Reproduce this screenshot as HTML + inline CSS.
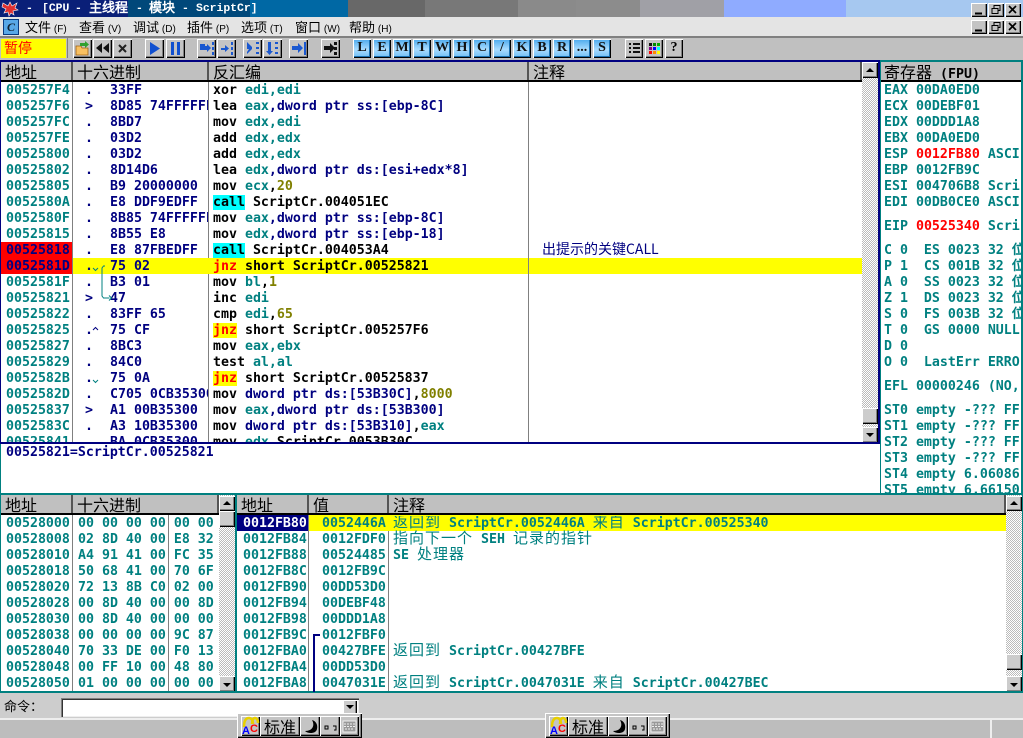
<!DOCTYPE html>
<html><head><meta charset="utf-8"><style>
*{box-sizing:border-box}
html,body{margin:0;padding:0;width:1023px;height:738px;overflow:hidden;background:#fff}
body{position:relative;font-family:"DejaVu Sans Mono","Noto Sans CJK SC",monospace}
div{position:absolute}
.m{font:bold 13.28px/16px "DejaVu Sans Mono","WenQuanYi Zen Hei",monospace;white-space:pre;overflow:hidden}
.t{color:#008080}.n{color:#000080}.k{color:#000}.o{color:#808000}.r{color:#f00}
.c{background:#0ff;color:#000}.j{background:#ff0;color:#f00}
.z{font:15px/16px "WenQuanYi Zen Hei","Noto Sans CJK SC",sans-serif;display:inline-block;height:16px;vertical-align:top;letter-spacing:1px;position:relative;top:-2px}
.h{background:#c0c0c0;border-bottom:2px solid #000;font:16px/19px "WenQuanYi Zen Hei","Noto Sans CJK SC",sans-serif;color:#000;padding-left:4px;white-space:pre;overflow:hidden;box-shadow:inset -2px 0 0 #555}
.b{background:#c4c4c4;box-shadow:inset 1px 1px 0 #fff,inset -1px -1px 0 #000,inset -2px -2px 0 #808080}
.w{background:#ccc;box-shadow:inset 1px 1px 0 #fff,inset -1px -1px 0 #000,inset -2px -2px 0 #808080}
.l{background:linear-gradient(#4aa8ec,#a8dcff 55%,#6cbcf4);box-shadow:inset 1px 1px 0 #fff,inset -1px -1px 0 #000,inset -2px -2px 0 #1a70b0;font:bold 14px/18px "Liberation Serif",serif;color:#111;text-align:center;width:18px;height:19px;top:39px}
.s{background-color:#fff;background-image:conic-gradient(#bbb 25%,#fff 0 50%,#bbb 0 75%,#fff 0);background-size:2px 2px}
.me{font:13px/18px "WenQuanYi Zen Hei","Noto Sans CJK SC",sans-serif;color:#000;top:18px;white-space:pre}
.me small{font:10px "Liberation Sans",sans-serif}
.ti{color:#fff;font:bold 11.4px/14px "Liberation Mono","WenQuanYi Zen Hei",monospace;top:2px;white-space:pre}
</style></head><body>

<!-- title bar -->
<div style="left:0;top:0;width:1023px;height:17px;background:linear-gradient(90deg,#0a1f78 0 128px,#00487a 128px 250px,#0068a4 250px 348px,#686868 348px 425px,#787878 425px 518px,#8a8a8a 518px 576px,#8c8c8c 576px 640px,#a0a0a6 640px 724px,#8fabff 724px 846px,#a6c8f0 846px)"></div>
<div class="ti" style="left:26px">-</div>
<div class="ti" style="left:42px">[CPU</div>
<div class="ti" style="left:75px">-</div>
<div class="ti" style="left:89px;font-size:13px">主线程</div>
<div class="ti" style="left:136px">-</div>
<div class="ti" style="left:149px;font-size:13px">模块</div>
<div class="ti" style="left:182px">-</div>
<div class="ti" style="left:196px">ScriptCr]</div>
<!-- menu -->
<div style="left:0;top:17px;width:1023px;height:19px;background:#e4e4e4"></div>
<div style="left:3px;top:19px;width:16px;height:16px;background:#58a8e8;border:1px solid #0a3a80;font:bold italic 12px/14px 'Liberation Serif',serif;color:#123;text-align:center">C</div>
<div class="me" style="left:25px">文件 <small>(F)</small></div>
<div class="me" style="left:79px">查看 <small>(V)</small></div>
<div class="me" style="left:133px">调试 <small>(D)</small></div>
<div class="me" style="left:187px">插件 <small>(P)</small></div>
<div class="me" style="left:241px">选项 <small>(T)</small></div>
<div class="me" style="left:295px">窗口 <small>(W)</small></div>
<div class="me" style="left:349px">帮助 <small>(H)</small></div>
<!-- window buttons -->
<div class="b" style="left:971px;top:3px;width:16px;height:14px"></div><div class="b" style="left:988px;top:3px;width:16px;height:14px"></div><div class="b" style="left:1005px;top:3px;width:16px;height:14px"></div>
<div class="b" style="left:971px;top:20px;width:16px;height:14px"></div><div class="b" style="left:988px;top:20px;width:16px;height:14px"></div><div class="b" style="left:1005px;top:20px;width:16px;height:14px"></div>
<!-- toolbar -->
<div style="left:0;top:36px;width:1023px;height:24px;background:#c0c0c0;border-top:2px solid #808080"></div>
<div style="left:1px;top:39px;width:65px;height:19px;background:#ff0;color:#f00;font:14px/19px 'WenQuanYi Zen Hei','Noto Sans CJK SC',sans-serif;padding-left:3px">暂停</div>
<div style="left:67px;top:38px;width:1px;height:20px;background:#808080"></div>
<div class="b" style="left:73px;top:39px;width:19px;height:19px"></div>
<div class="b" style="left:93px;top:39px;width:19px;height:19px"></div>
<div class="b" style="left:113px;top:39px;width:19px;height:19px"></div>
<div class="b" style="left:145px;top:39px;width:19px;height:19px"></div>
<div class="b" style="left:166px;top:39px;width:19px;height:19px"></div>
<div class="b" style="left:197px;top:39px;width:19px;height:19px"></div>
<div class="b" style="left:217px;top:39px;width:19px;height:19px"></div>
<div class="b" style="left:243px;top:39px;width:19px;height:19px"></div>
<div class="b" style="left:263px;top:39px;width:19px;height:19px"></div>
<div class="b" style="left:289px;top:39px;width:19px;height:19px"></div>
<div class="b" style="left:321px;top:39px;width:19px;height:19px"></div>
<div class="l" style="left:353px">L</div><div class="l" style="left:373px">E</div><div class="l" style="left:393px">M</div><div class="l" style="left:413px">T</div><div class="l" style="left:433px">W</div><div class="l" style="left:453px">H</div><div class="l" style="left:473px">C</div><div class="l" style="left:493px">/</div><div class="l" style="left:513px">K</div><div class="l" style="left:533px">B</div><div class="l" style="left:553px">R</div><div class="l" style="left:573px">...</div><div class="l" style="left:593px">S</div>
<div class="b" style="left:625px;top:39px;width:18px;height:19px"></div>
<div class="b" style="left:645px;top:39px;width:18px;height:19px"></div>
<div class="b" style="left:665px;top:39px;width:18px;height:19px;font:bold 14px/18px 'Liberation Serif',serif;text-align:center">?</div>

<!-- CPU pane -->
<div style="left:0;top:60px;width:880px;height:2px;background:#000080"></div>
<div style="left:880px;top:60px;width:143px;height:2px;background:#008080"></div>
<div style="left:0;top:62px;width:1px;height:382px;background:#000080"></div>
<div style="left:878px;top:62px;width:2px;height:382px;background:#000080"></div>
<div class="h" style="left:1px;top:62px;width:72px;height:20px">地址</div>
<div class="h" style="left:73px;top:62px;width:136px;height:20px">十六进制</div>
<div class="h" style="left:209px;top:62px;width:320px;height:20px">反汇编</div>
<div class="h" style="left:529px;top:62px;width:333px;height:20px">注释</div>
<div style="left:72px;top:82px;width:1px;height:361px;background:#808080"></div>
<div style="left:208px;top:82px;width:1px;height:361px;background:#808080"></div>
<div style="left:528px;top:82px;width:1px;height:361px;background:#808080"></div>
<div style="left:1px;top:242px;width:71px;height:32px;background:#f00"></div>
<div style="left:73px;top:258px;width:789px;height:16px;background:#ff0"></div>
<div style="left:528px;top:258px;width:1px;height:16px;background:#808080"></div>

<div class="m t" style="left:6px;top:83px;width:66px;height:360px">005257F4
005257F6
005257FC
005257FE
00525800
00525802
00525805
0052580A
0052580F
00525815
<span class="n">00525818
0052581D</span>
0052581F
00525821
00525822
00525825
00525827
00525829
0052582B
0052582D
00525837
0052583C
00525841</div>
<div class="m n" style="left:85px;top:83px;width:12px;height:360px">.
&gt;
.
.
.
.
.
.
.
.
.
.
.
&gt;
.
.
.
.
.
.
&gt;
.
.</div>
<div class="m n" style="left:110px;top:83px;width:98px;height:360px">33FF
8D85 74FFFFFF
8BD7
03D2
03D2
8D14D6
B9 20000000
E8 DDF9EDFF
8B85 74FFFFFF
8B55 E8
E8 87FBEDFF
75 02
B3 01
47
83FF 65
75 CF
8BC3
84C0
75 0A
C705 0CB35300
A1 00B35300
A3 10B35300
BA 0CB35300</div>
<div class="m k" style="left:213px;top:83px;width:315px;height:360px">xor <span class="t">edi,edi</span>
lea <span class="t">eax</span><span class="n">,dword ptr ss:[ebp-8C]</span>
mov <span class="t">edx,edi</span>
add <span class="t">edx,edx</span>
add <span class="t">edx,edx</span>
lea <span class="t">edx</span><span class="n">,dword ptr ds:[esi+edx*8]</span>
mov <span class="t">ecx</span>,<span class="o">20</span>
<span class="c">call</span> ScriptCr.004051EC
mov <span class="t">eax</span><span class="n">,dword ptr ss:[ebp-8C]</span>
mov <span class="t">edx</span><span class="n">,dword ptr ss:[ebp-18]</span>
<span class="c">call</span> ScriptCr.004053A4
<span class="j">jnz</span> short ScriptCr.00525821
mov <span class="t">bl</span>,<span class="o">1</span>
inc <span class="t">edi</span>
cmp <span class="t">edi</span>,<span class="o">65</span>
<span class="j">jnz</span> short ScriptCr.005257F6
mov <span class="t">eax,ebx</span>
test <span class="t">al,al</span>
<span class="j">jnz</span> short ScriptCr.00525837
mov <span class="n">dword ptr ds:[53B30C]</span>,<span class="o">8000</span>
mov <span class="t">eax</span><span class="n">,dword ptr ds:[53B300]</span>
mov <span class="n">dword ptr ds:[53B310]</span>,<span class="t">eax</span>
mov <span class="t">edx</span>,ScriptCr.0053B30C</div>
<div style="left:542px;top:241px;font:14px/16px 'WenQuanYi Zen Hei','Noto Sans CJK SC',sans-serif;color:#000080">出提示的关键CALL</div>

<!-- CPU scrollbar -->
<div class="s" style="left:862px;top:62px;width:16px;height:381px"></div>
<div class="w" style="left:862px;top:62px;width:16px;height:16px"></div>
<div class="w" style="left:862px;top:408px;width:16px;height:16px"></div>
<div class="w" style="left:862px;top:427px;width:16px;height:16px"></div>

<!-- registers -->
<div style="left:880px;top:62px;width:1px;height:432px;background:#008080"></div>
<div style="left:1021px;top:62px;width:2px;height:432px;background:#008080"></div>
<div class="h" style="left:881px;top:62px;width:140px;height:20px;font:bold 13.28px/19px 'DejaVu Sans Mono','WenQuanYi Zen Hei',monospace;padding-left:3px;box-shadow:none"><span style="font:16px/19px 'WenQuanYi Zen Hei','Noto Sans CJK SC',sans-serif">寄存器</span> (FPU)</div>
<div class="m t" style="left:884px;top:83px;width:137px;height:410px">EAX 00DA0ED0
ECX 00DEBF01
EDX 00DDD1A8
EBX 00DA0ED0
ESP <span class="r">0012FB80</span> ASCI
EBP 0012FB9C
ESI 004706B8 Scri
EDI 00DB0CE0 ASCI
<span style="display:block;height:8px"></span>EIP <span class="r">00525340</span> Scri
<span style="display:block;height:8px"></span>C 0  ES 0023 32 位
P 1  CS 001B 32 位
A 0  SS 0023 32 位
Z 1  DS 0023 32 位
S 0  FS 003B 32 位
T 0  GS 0000 NULL
D 0
O 0  LastErr ERRO
<span style="display:block;height:8px"></span>EFL 00000246 (NO,
<span style="display:block;height:8px"></span>ST0 empty -??? FF
ST1 empty -??? FF
ST2 empty -??? FF
ST3 empty -??? FF
ST4 empty 6.06086
ST5 empty 6.66150</div>

<!-- info pane -->
<div style="left:0;top:442px;width:880px;height:2px;background:#000080"></div>
<div style="left:0;top:444px;width:1px;height:50px;background:#008080"></div>
<div class="m n" style="left:6px;top:445px;width:400px;height:16px">00525821=ScriptCr.00525821</div>
<div style="left:0;top:493px;width:1023px;height:2px;background:#008080"></div>

<!-- dump pane -->
<div style="left:0;top:495px;width:1px;height:197px;background:#008080"></div>
<div class="h" style="left:1px;top:495px;width:72px;height:20px">地址</div>
<div class="h" style="left:73px;top:495px;width:146px;height:20px">十六进制</div>
<div style="left:72px;top:515px;width:1px;height:177px;background:#808080"></div>
<div style="left:168px;top:515px;width:1px;height:177px;background:#808080"></div>
<div class="m t" style="left:6px;top:516px;width:66px;height:176px">00528000
00528008
00528010
00528018
00528020
00528028
00528030
00528038
00528040
00528048
00528050</div>
<div class="m t" style="left:78px;top:516px;width:140px;height:176px">00 00 00 00 00 00
02 8D 40 00 E8 32
A4 91 41 00 FC 35
50 68 41 00 70 6F
72 13 8B C0 02 00
00 8D 40 00 00 8D
00 8D 40 00 00 00
00 00 00 00 9C 87
70 33 DE 00 F0 13
00 FF 10 00 48 80
01 00 00 00 00 00</div>
<div class="s" style="left:219px;top:495px;width:16px;height:197px"></div>
<div class="w" style="left:219px;top:496px;width:16px;height:15px"></div>
<div class="w" style="left:219px;top:511px;width:16px;height:16px"></div>
<div class="w" style="left:219px;top:676px;width:16px;height:16px"></div>
<div style="left:235px;top:495px;width:2px;height:197px;background:#008080"></div>

<!-- stack pane -->
<div class="h" style="left:237px;top:495px;width:72px;height:20px">地址</div>
<div class="h" style="left:309px;top:495px;width:80px;height:20px">值</div>
<div class="h" style="left:389px;top:495px;width:617px;height:20px">注释</div>
<div style="left:308px;top:515px;width:1px;height:177px;background:#808080"></div>
<div style="left:388px;top:515px;width:1px;height:177px;background:#808080"></div>
<div style="left:237px;top:515px;width:71px;height:16px;background:#000080"></div>
<div style="left:309px;top:515px;width:697px;height:16px;background:#ff0"></div>
<div class="m t" style="left:243px;top:516px;width:65px;height:176px"><span style="color:#fff">0012FB80</span>
0012FB84
0012FB88
0012FB8C
0012FB90
0012FB94
0012FB98
0012FB9C
0012FBA0
0012FBA4
0012FBA8</div>
<div class="m t" style="left:322px;top:516px;width:66px;height:176px">0052446A
0012FDF0
00524485
0012FB9C
00DD53D0
00DEBF48
00DDD1A8
0012FBF0
00427BFE
00DD53D0
0047031E</div>
<div class="m t" style="left:393px;top:516px;width:612px;height:176px"><span class="z">返回到</span> ScriptCr.0052446A <span class="z">来自</span> ScriptCr.00525340
<span class="z">指向下一个</span> SEH <span class="z">记录的指针</span>
SE <span class="z">处理器</span>





<span class="z">返回到</span> ScriptCr.00427BFE

<span class="z">返回到</span> ScriptCr.0047031E <span class="z">来自</span> ScriptCr.00427BEC</div>
<div class="s" style="left:1006px;top:495px;width:16px;height:197px"></div>
<div class="w" style="left:1006px;top:496px;width:16px;height:15px"></div>
<div class="w" style="left:1006px;top:654px;width:16px;height:16px"></div>
<div class="w" style="left:1006px;top:676px;width:16px;height:16px"></div>
<div style="left:1022px;top:495px;width:1px;height:197px;background:#008080"></div>
<div style="left:0;top:691px;width:1023px;height:2px;background:#008080"></div>

<!-- command -->
<div style="left:0;top:693px;width:1023px;height:25px;background:#cdcdcd"></div>
<div style="left:4px;top:698px;font:13px/16px 'WenQuanYi Zen Hei','Noto Sans CJK SC',sans-serif;color:#000">命令：</div>
<div style="left:61px;top:698px;width:298px;height:19px;background:#fff;box-shadow:inset 1px 1px 0 #808080,inset 2px 2px 0 #333,inset -1px -1px 0 #eee"></div>
<div class="w" style="left:343px;top:700px;width:14px;height:15px"></div>
<!-- status -->
<div style="left:0;top:718px;width:1023px;height:20px;background:#bdbdbd;border-top:2px solid #eee"></div>
<div style="left:990px;top:720px;width:2px;height:18px;background:#eee"></div>
<!-- IME bars -->
<div class="b" style="left:237px;top:713px;width:125px;height:25px"></div>
<div class="b" style="left:241px;top:716px;width:19px;height:20px"></div>
<div class="b" style="left:260px;top:716px;width:40px;height:20px;font:16px/20px 'WenQuanYi Zen Hei','Noto Sans CJK SC',sans-serif;text-align:center;color:#000">标准</div>
<div class="b" style="left:300px;top:716px;width:20px;height:20px"></div>
<div class="b" style="left:320px;top:716px;width:20px;height:20px"></div>
<div class="b" style="left:340px;top:716px;width:19px;height:20px"></div>
<div class="b" style="left:545px;top:713px;width:125px;height:25px"></div>
<div class="b" style="left:549px;top:716px;width:19px;height:20px"></div>
<div class="b" style="left:568px;top:716px;width:40px;height:20px;font:16px/20px 'WenQuanYi Zen Hei','Noto Sans CJK SC',sans-serif;text-align:center;color:#000">标准</div>
<div class="b" style="left:608px;top:716px;width:20px;height:20px"></div>
<div class="b" style="left:628px;top:716px;width:20px;height:20px"></div>
<div class="b" style="left:648px;top:716px;width:19px;height:20px"></div>

<!-- icon overlay -->
<svg width="1023" height="738" viewBox="0 0 1023 738" style="position:absolute;left:0;top:0">
<!-- app logo -->
<path d="M3 3l5 3 2-4 2 4 5-3-2 5 3 2-5 1 1 4-3-2-2 3-1-4-4 1 2-4-4-2z" fill="#e03030" stroke="#fff" stroke-width=".6"/>
<!-- window glyphs -->
<g fill="none" stroke="#000"><path d="M975 13.500h7" stroke-width="2"/><path d="M992 8.500h6v5h-6zM994 8V5.500h6v5h-2"/><path d="M1009 6l7 7M1016 6l-7 7" stroke-width="1.600"/></g>
<g fill="none" stroke="#000"><path d="M975 30.500h7" stroke-width="2"/><path d="M992 25.500h6v5h-6zM994 25v-2.500h6v5h-2"/><path d="M1009 23l7 7M1016 23l-7 7" stroke-width="1.600"/></g>
<!-- open -->
<path d="M76 46h5l1 2h6v7H76z" fill="#f8c060" stroke="#a06010" stroke-width=".8"/><path d="M80 43h5v-2l4 3.500-4 3.500v-2h-5z" fill="#30a030"/>
<!-- rewind, close -->
<path d="M102 43v10l-6-5zM109 43v10l-6-5z" fill="#111"/>
<path d="M119 45l7 7M126 45l-7 7" stroke="#222" stroke-width="2"/>
<!-- play/pause -->
<path d="M150 42l10 6.500-10 6.500z" fill="#1050d0"/>
<path d="M171 42h3v13h-3zM177 42h3v13h-3z" fill="#1050d0"/>
<!-- steps -->
<g fill="#1a58d0">
<path d="M200 44h5v2h2v-2l4 4-4 4v-2h-2-5z"/><path d="M212 42h2v3h-2zM212 47h2v3h-2zM212 52h2v3h-2z"/>
<path d="M221 48h4v-3l4 3.500-4 3.500v-2h-4z"/><path d="M231 42h2v3h-2zM231 47h2v3h-2zM231 52h2v3h-2z"/>
<path d="M247 42l5 5v2l-5 5v-2l2-3h-2zM247 47h5v2h-5z"/><path d="M256 42h3v2h-3zM256 47h3v2h-3zM256 52h3v2h-3z"/>
<path d="M268 42h3v9h2l-3.500 4-3.500-4h2z"/><path d="M275 42h3v2h-3zM275 47h3v2h-3zM275 52h3v2h-3z"/>
<path d="M292 46h6v-3l5 5-5 5v-3h-6z"/><path d="M304 42h2v13h-2z"/>
</g>
<g fill="#111"><path d="M324 46h6v-3l5 5-5 5v-3h-6z"/><path d="M334 42h3v3h-3zM334 47h3v3h-3zM334 52h3v3h-3z"/></g>
<!-- list, color -->
<path d="M629 43h2v2h-2zM633 43h7v2h-7zM629 47h2v2h-2zM633 47h7v2h-7zM629 51h2v2h-2zM633 51h7v2h-7z" fill="#111"/>
<g><rect x="649" y="43" width="3" height="3" fill="#111"/><rect x="653" y="43" width="3" height="3" fill="#080"/><rect x="657" y="43" width="3" height="3" fill="#0a0"/>
<rect x="649" y="47" width="3" height="3" fill="#808"/><rect x="653" y="47" width="3" height="3" fill="#00f"/><rect x="657" y="47" width="3" height="3" fill="#0ff"/>
<rect x="649" y="51" width="3" height="3" fill="#f00"/><rect x="653" y="51" width="3" height="3" fill="#f80"/><rect x="657" y="51" width="3" height="3" fill="#ff0"/></g>
<!-- jump -->
<path d="M105 266h-1.500l-1.500 2v28l1.500 2h6" fill="none" stroke="#008080"/><path d="M109 295.500l2.500 2.500-2.500 2.500" fill="none" stroke="#008080"/>
<path d="M93 268l2.500 2.500 2.500-2.500M93 380l2.500 2.500 2.500-2.500" fill="none" stroke="#008080"/>
<path d="M93 330l2.500-2.500 2.500 2.500" fill="none" stroke="#000080"/>
<!-- stack bracket -->
<path d="M320 635h-6v57" fill="none" stroke="#000080" stroke-width="2"/>
<!-- scroll arrows -->
<g fill="#000"><path d="M866 72l4-4 4 4zM866 433l8 0-4 4zM223 505l4-4 4 4zM223 683h8l-4 4zM1010 505l4-4 4 4zM1010 683h8l-4 4zM346 705h8l-4 4z"/></g>
<!-- IME -->
<g id="i1"><path d="M244 727c0-8 3-9 5-9s4 2 4 6M252 724c0-5 2-6 3-6s3 1 3 5" fill="none" stroke="#e8d000" stroke-width="2.500"/><text x="242" y="734" font-family="Liberation Sans" font-weight="bold" font-size="11" fill="#00f">A</text><text x="250" y="732" font-family="Liberation Sans" font-weight="bold" font-size="11" fill="#f00">C</text>
<path d="M312 720c3 5 1 11-7 11 3 3 11 3 12-2 1-4-1-8-5-9z" fill="#000"/><path d="M325 726h3v3h-3zM333 726h3v4h-2" fill="none" stroke="#000"/><rect x="343" y="721" width="13" height="11" fill="#999" stroke="#eee"/><path d="M344 724h11M344 726.500h11M345 729h9" stroke="#eee" stroke-dasharray="2 1"/></g>
<use href="#i1" x="308"/>
</svg>
</body></html>
